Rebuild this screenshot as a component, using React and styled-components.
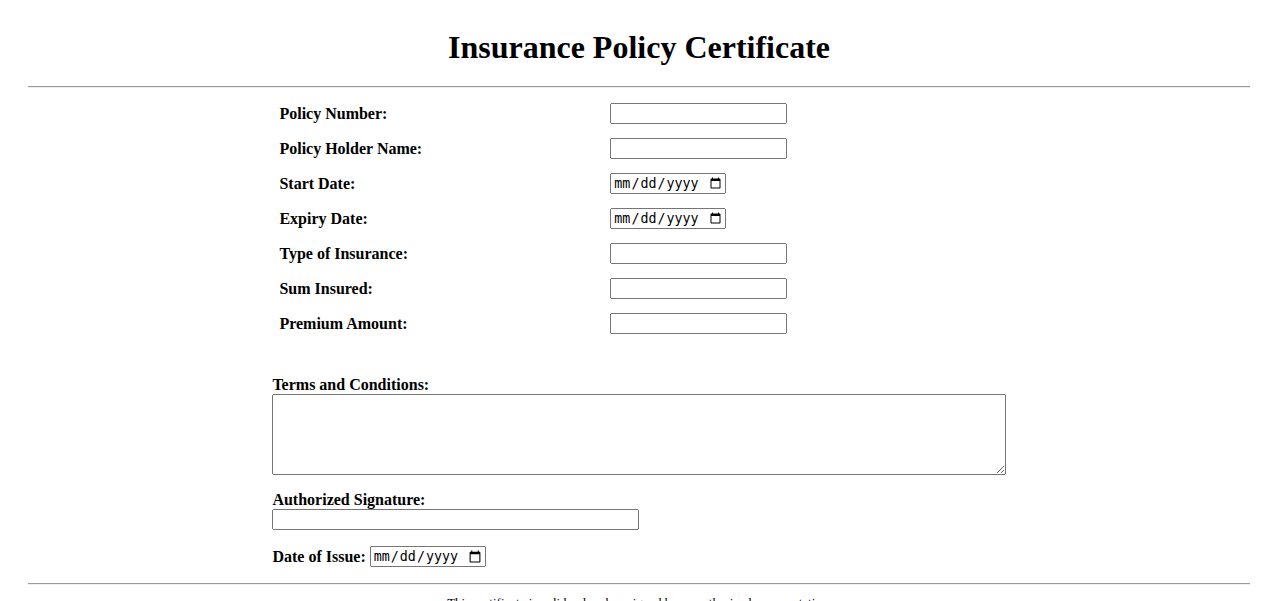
import React from "react";
import styled, { createGlobalStyle } from "styled-components";

const GlobalStyle = createGlobalStyle`
  html, body {
    margin: 0;
    padding: 0;
    background: #ffffff;
  }
  body {
    font-family: "Liberation Serif", "Times New Roman", serif;
    color: #000000;
  }
`;

const Page = styled.div`
  padding: 8px 28px 0;
`;

const Title = styled.h1`
  margin: 21px 0 0;
  font-size: 32px;
  font-weight: bold;
  text-align: center;
  line-height: 37px;
`;

const Rule = styled.hr`
  margin: ${(p) => p.$top}px 0 ${(p) => p.$bottom}px;
  border: none;
  border-top: 1px solid #9a9a9a;
  border-bottom: 1px solid #eeeeee;
  height: 0;
`;

const Form = styled.form`
  width: 60%;
  margin: 0 auto;
  display: flex;
  flex-direction: column;
`;

const FieldGrid = styled.div`
  display: grid;
  grid-template-columns: 45% 1fr;
  row-gap: 2px;
  padding: 2px 0;
`;

const LabelCell = styled.label`
  display: flex;
  align-items: center;
  padding: 6px 8px 6px 7px;
  font-weight: bold;
  font-size: 16px;
`;

const InputCell = styled.div`
  display: flex;
  align-items: center;
  padding: 6px 8px;
`;

const TextInput = styled.input`
  box-sizing: border-box;
  width: ${(p) => p.$width || "177px"};
  height: 21px;
  margin: 0;
`;

const DateInput = styled.input`
  box-sizing: border-box;
  width: 116px;
  height: 21px;
  margin: 0;
`;

const Block = styled.div`
  display: flex;
  flex-direction: column;
  align-items: flex-start;
  gap: 1px;
  margin-top: ${(p) => p.$top}px;
`;

const BlockLabel = styled.label`
  font-weight: bold;
  font-size: 16px;
  line-height: 17px;
`;

const TermsArea = styled.textarea`
  box-sizing: border-box;
  width: 100%;
  height: 81px;
  margin: 0;
  resize: both;
`;

const InlineRow = styled.div`
  display: flex;
  align-items: center;
  gap: 4px;
  margin-top: 16px;
`;

const Footer = styled.p`
  margin: 10px 0 0;
  text-align: center;
  font-size: 13px;
`;

const fields = [
  { id: "policyNumber", label: "Policy Number:", type: "text" },
  { id: "holderName", label: "Policy Holder Name:", type: "text" },
  { id: "startDate", label: "Start Date:", type: "date" },
  { id: "expiryDate", label: "Expiry Date:", type: "date" },
  { id: "insuranceType", label: "Type of Insurance:", type: "text" },
  { id: "sumInsured", label: "Sum Insured:", type: "text" },
  { id: "premium", label: "Premium Amount:", type: "text" },
];

export default function App() {
  return (
    <>
      <GlobalStyle />
      <Page>
        <Title>Insurance Policy Certificate</Title>
        <Rule $top={20} $bottom={7} />
        <Form onSubmit={(e) => e.preventDefault()}>
          <FieldGrid>
            {fields.map((f) => (
              <React.Fragment key={f.id}>
                <LabelCell htmlFor={f.id}>{f.label}</LabelCell>
                <InputCell>
                  {f.type === "date" ? (
                    <DateInput id={f.id} type="date" />
                  ) : (
                    <TextInput id={f.id} type="text" />
                  )}
                </InputCell>
              </React.Fragment>
            ))}
          </FieldGrid>
          <Block $top={34}>
            <BlockLabel htmlFor="terms">Terms and Conditions:</BlockLabel>
            <TermsArea id="terms" />
          </Block>
          <Block $top={16}>
            <BlockLabel htmlFor="signature">Authorized Signature:</BlockLabel>
            <TextInput id="signature" type="text" $width="50%" />
          </Block>
          <InlineRow>
            <BlockLabel htmlFor="issueDate">Date of Issue:</BlockLabel>
            <DateInput id="issueDate" type="date" />
          </InlineRow>
        </Form>
        <Rule $top={16} $bottom={0} />
        <Footer>
          This certificate is valid only when signed by an authorized representative.
        </Footer>
      </Page>
    </>
  );
}
